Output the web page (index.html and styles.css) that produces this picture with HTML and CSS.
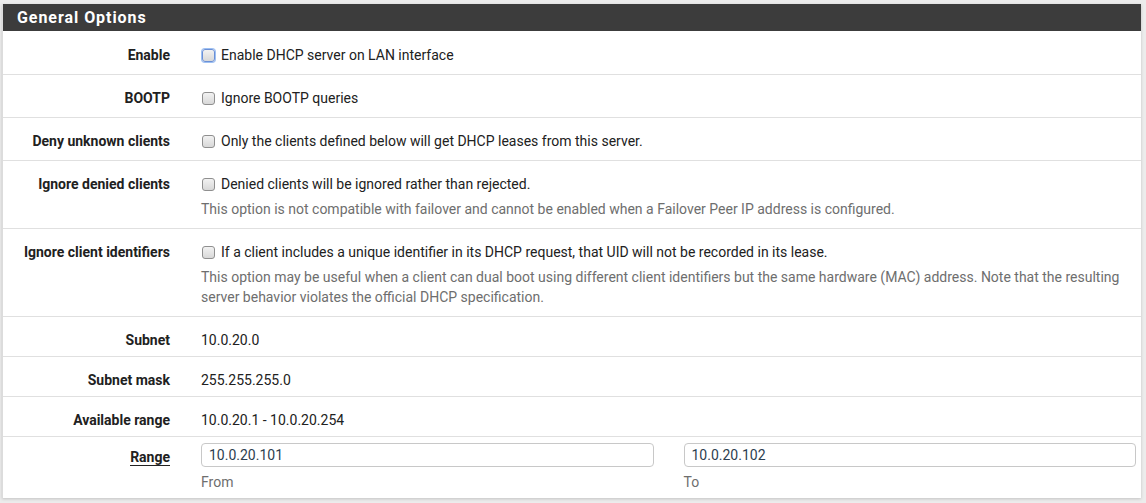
FILE: index.html
```html
<!DOCTYPE html>
<html>
<head>
<meta charset="utf-8">
<link rel="stylesheet" href="styles.css">
</head>
<body>
<div class="panel">
  <div class="panel-heading"><h2 class="panel-title">General Options</h2></div>
  <div class="panel-body">
    <div class="form-row">
      <div class="label">Enable</div>
      <div class="field"><label class="check"><span class="cb focus"></span>Enable DHCP server on LAN interface</label></div>
    </div>
    <div class="form-row">
      <div class="label">BOOTP</div>
      <div class="field"><label class="check"><span class="cb"></span>Ignore BOOTP queries</label></div>
    </div>
    <div class="form-row">
      <div class="label">Deny unknown clients</div>
      <div class="field"><label class="check"><span class="cb"></span>Only the clients defined below will get DHCP leases from this server.</label></div>
    </div>
    <div class="form-row">
      <div class="label">Ignore denied clients</div>
      <div class="field"><label class="check"><span class="cb"></span>Denied clients will be ignored rather than rejected.</label>
        <p class="help">This option is not compatible with failover and cannot be enabled when a Failover Peer IP address is configured.</p></div>
    </div>
    <div class="form-row">
      <div class="label">Ignore client identifiers</div>
      <div class="field"><label class="check"><span class="cb"></span>If a client includes a unique identifier in its DHCP request, that UID will not be recorded in its lease.</label>
        <p class="help">This option may be useful when a client can dual boot using different client identifiers but the same hardware (MAC) address. Note that the resulting server behavior violates the official DHCP specification.</p></div>
    </div>
    <div class="form-row plain">
      <div class="label">Subnet</div>
      <div class="field">10.0.20.0</div>
    </div>
    <div class="form-row plain">
      <div class="label">Subnet mask</div>
      <div class="field">255.255.255.0</div>
    </div>
    <div class="form-row plain">
      <div class="label">Available range</div>
      <div class="field">10.0.20.1 - 10.0.20.254</div>
    </div>
    <div class="form-row range">
      <div class="label"><span class="req">Range</span></div>
      <div class="field split">
        <div class="sub"><input class="input" type="text" value="10.0.20.101"><div class="help sm">From</div></div>
        <div class="sub"><input class="input" type="text" value="10.0.20.102"><div class="help sm">To</div></div>
      </div>
    </div>
  </div>
</div>
</body>
</html>
```
FILE: styles.css
```css
html, body {
  margin: 0;
  padding: 0;
  background: #ececec;
}
body {
  padding: 4px 5px 5px 2px;
  font-family: Roboto, "Liberation Sans", sans-serif;
  font-size: 14px;
  line-height: 20px;
  color: #212121;
}
.panel {
  background: #fff;
  border-left: 1px solid #dcdcdc;
  box-shadow: 0 1px 3px rgba(0,0,0,0.18);
}
.panel-heading {
  background: #3c3c3c;
  height: 27px;
  padding-left: 14px;
  display: flex;
  align-items: center;
}
.panel-title {
  margin: 0;
  color: #fff;
  font-size: 16px;
  font-weight: 700;
  letter-spacing: 0.95px;
  line-height: 20px;
}
.form-row {
  display: grid;
  grid-template-columns: 182px 1fr;
  column-gap: 15px;
  border-top: 1px solid #e0e0e0;
  padding: 13px 0 9px;
}
.form-row:first-child {
  border-top: 0;
  padding-top: 14px;
}
.form-row.plain {
  padding: 13px 0 6px;
}
.form-row.range {
  padding: 6px 0 6px;
}
.label {
  text-align: right;
  font-weight: 700;
  padding-right: 15px;
}
.range .label {
  padding-top: 4px;
}
.req {
  border-bottom: 1px solid #212121;
}
.field {
  padding-right: 5px;
  padding-left: 1px;
}
.check {
  display: flex;
  align-items: center;
}
.cb {
  width: 11px;
  height: 11px;
  border: 1px solid #8f8f8f;
  border-radius: 3px;
  background: linear-gradient(#f2f2f2, #d8d8d8);
  margin: 0 6px 0 1px;
  flex: none;
}
.cb.focus {
  border-color: #6a8fd6;
  box-shadow: 0 0 0 1px #9ec0f2;
}
.help {
  margin: 5px 0 0;
  color: #6e6e6e;
}
.help.sm {
  margin-top: 5px;
}
.split {
  display: grid;
  grid-template-columns: 1fr 1fr;
  column-gap: 30px;
  padding-left: 1px;
}
.input {
  display: block;
  box-sizing: border-box;
  width: 100%;
  height: 24px;
  border: 1px solid #c8c8c8;
  border-radius: 4px;
  padding: 0 7px;
  font-family: Roboto, "Liberation Sans", sans-serif;
  font-size: 14px;
  color: #2d3e50;
  background: #fff;
  margin: 0;
}
```
